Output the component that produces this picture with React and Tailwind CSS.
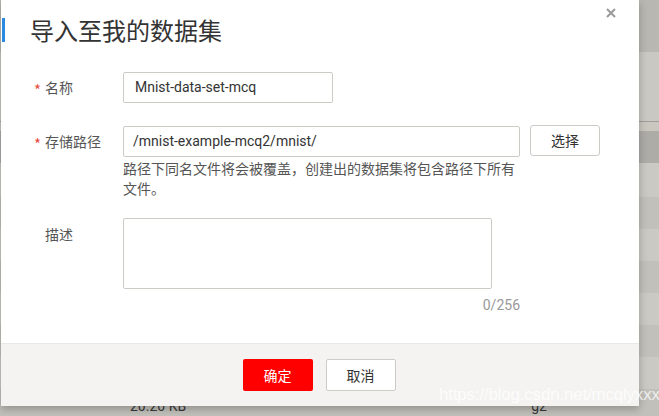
import React from "react";

const rows = [
  { h: "h-[52px]", bg: "bg-[#b9b7b1]" },
  { h: "h-[69px]", bg: "bg-[#cac8c2]" },
  { h: "h-px", bg: "bg-[#9e9d99]" },
  { h: "h-[9px]", bg: "bg-[#c9c7c0]" },
  { h: "h-[32px]", bg: "bg-[#adaca7]" },
  { h: "h-[34px]", bg: "bg-[#cbc9c3]" },
  { h: "h-[32px]", bg: "bg-[#c2c0ba]" },
  { h: "h-[32px]", bg: "bg-[#cbc9c3]" },
  { h: "h-[32px]", bg: "bg-[#c2c0ba]" },
  { h: "h-[32px]", bg: "bg-[#cbc9c3]" },
  { h: "h-[32px]", bg: "bg-[#c2c0ba]" },
  { h: "h-[32px]", bg: "bg-[#cbc9c3]" },
];

function Label({ text, required }) {
  return (
    <div className="w-[89px] shrink-0 flex items-center text-[14px] text-[#555]">
      <span className={`w-[11px] text-[#e84c3d] text-[15px] leading-none pt-[3px] ${required ? "" : "invisible"}`}>*</span>
      <span>{text}</span>
    </div>
  );
}

export default function App() {
  return (
    <div
      className="relative w-[659px] h-[416px] overflow-hidden"
      style={{ fontFamily: '"Noto Sans CJK SC", Roboto, sans-serif' }}
    >
      {/* table behind the overlay */}
      <div className="flex flex-col w-full">
        {rows.map((r, i) => (
          <div key={i} className={`${r.h} ${r.bg} shrink-0`} />
        ))}
        <div className="h-[32px] bg-[#c2c0ba] shrink-0 flex items-center text-[14px] text-[#3a3a3a]" style={{ fontFamily: "Roboto, sans-serif" }}>
          <span className="ml-[130px] mt-[3px]">20.20 KB</span>
          <span className="ml-[345px] mt-[3px]">g2</span>
        </div>
      </div>

      {/* dialog */}
      <div className="absolute left-px top-0 w-[638px] h-[406px] bg-white flex flex-col shadow-[0_3px_8px_rgba(0,0,0,0.25)]">
        <div className="absolute left-px top-[18px] w-[3px] h-[24px] bg-[#2a8ae0]" />
        <button className="absolute left-[604px] top-[7px] w-[12px] h-[12px] flex items-center justify-center">
          <svg width="10" height="10" viewBox="0 0 10 10">
            <path d="M1 1L9 9M9 1L1 9" stroke="#9a9a9a" strokeWidth="2" />
          </svg>
        </button>

        <div className="pl-[29px] pt-[15px] h-[72px] text-[24px] leading-[30px] text-[#333]">导入至我的数据集</div>

        <div className="pl-[33px] flex flex-col">
          <div className="flex">
            <Label text="名称" required />
            <div className="w-[210px] h-[31px] border border-[#cccbc6] rounded-[2px] flex items-center px-[11px] text-[14px] text-[#333]" style={{ fontFamily: "Roboto, sans-serif" }}>
              Mnist-data-set-mcq
            </div>
          </div>

          <div className="flex mt-[23px]">
            <div className="w-[89px] shrink-0 h-[31px] flex">
              <Label text="存储路径" required />
            </div>
            <div className="flex flex-col w-[397px]">
              <div className="h-[31px] border border-[#cccbc6] rounded-[2px] flex items-center px-[9px] text-[14px] text-[#333]" style={{ fontFamily: "Roboto, sans-serif" }}>
                /mnist-example-mcq2/mnist/
              </div>
              <div className="text-[14px] leading-[20px] text-[#555] mt-[1px]">
                路径下同名文件将会被覆盖，创建出的数据集将包含路径下所有文件。
              </div>
            </div>
            <button className="ml-[10px] -mt-px w-[70px] h-[31px] border border-[#cccbc6] rounded-[3px] bg-white text-[14px] text-[#333]">
              选择
            </button>
          </div>

          <div className="flex mt-[20px]">
            <div className="w-[89px] shrink-0 h-[33px] flex">
              <Label text="描述" />
            </div>
            <div className="flex flex-col w-[397px]">
              <div className="w-[369px] h-[71px] border border-[#cccbc6] rounded-[2px]" />
              <div className="text-right text-[14px] leading-[20px] text-[#999] mt-[6px]" style={{ fontFamily: "Roboto, sans-serif" }}>
                0/256
              </div>
            </div>
          </div>
        </div>

        <div className="mt-auto h-[63px] bg-[#f4f3f1] border-t border-[#e9e8e5] flex items-center justify-center gap-[13px] pr-[2px]">
          <button className="w-[70px] h-[32px] bg-[#ff0000] rounded-[2px] text-white text-[14px]">确定</button>
          <button className="w-[70px] h-[32px] bg-white border border-[#cccbc6] rounded-[2px] text-[#333] text-[14px]">取消</button>
        </div>
      </div>

      {/* watermark */}
      <div
        className="absolute left-[439px] top-[385px] text-[17px] leading-[20px] text-white/75 tracking-[-0.2px]"
        style={{ fontFamily: '"Liberation Sans", Arial, sans-serif' }}
      >
        https://blog.csdn.net/mcqlyxxx
      </div>
    </div>
  );
}
